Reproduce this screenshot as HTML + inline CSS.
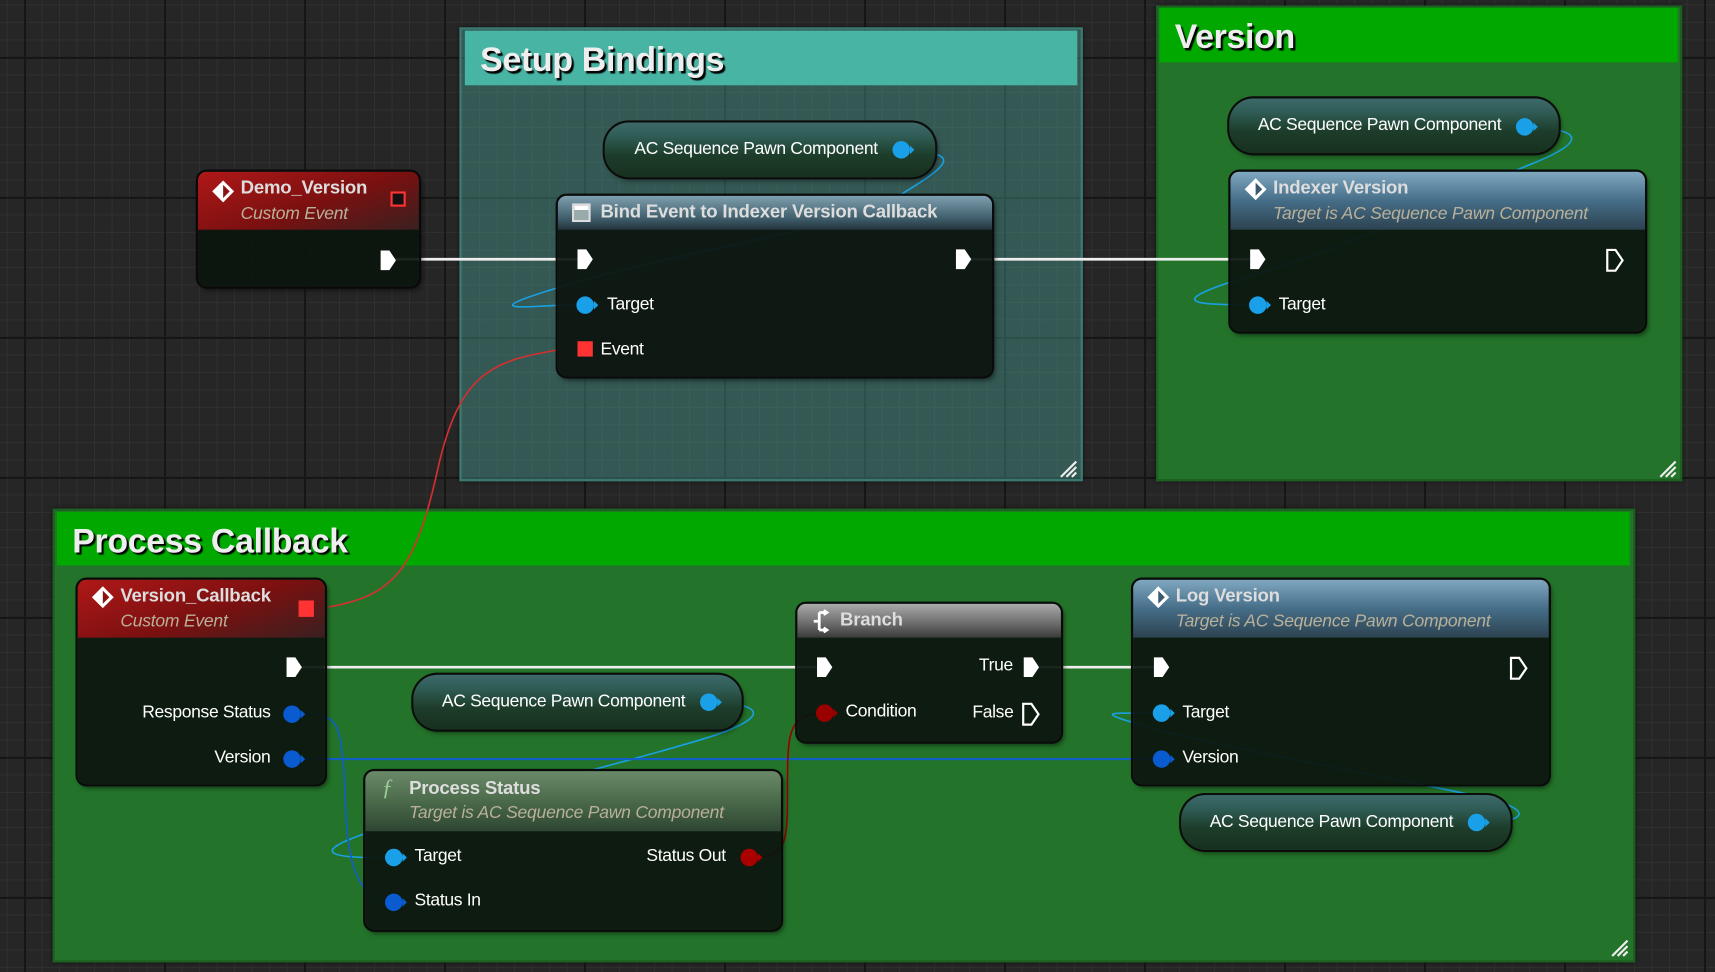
<!DOCTYPE html>
<html><head><meta charset="utf-8"><style>
html,body{margin:0;padding:0;width:1715px;height:972px;overflow:hidden;background:#262626}
#w{position:absolute;left:0;top:0;width:1568px;height:889px;transform:scale(1.09375);transform-origin:0 0;
background-color:#262626;
background-image:linear-gradient(#151515 2px,transparent 2px),linear-gradient(90deg,#151515 2px,transparent 2px),linear-gradient(#303030 1px,transparent 1px),linear-gradient(90deg,#303030 1px,transparent 1px);
background-size:128px 128px,128px 128px,16px 16px,16px 16px;background-position:22px 52px,22px 52px,6px 4px,6px 4px;
font-family:"Liberation Sans Narrow","Liberation Sans",sans-serif;color:#fff}
.a{position:absolute}
.cm{position:absolute;box-shadow:0 0 4px rgba(0,0,0,.6)}
.cmh{position:absolute;font-weight:bold;font-size:31px;letter-spacing:-0.3px;color:#eee;text-shadow:2px 2px 1px #000;padding-left:14px;box-sizing:border-box}
.node{position:absolute;background:rgba(12,20,14,.93);border-radius:8px;box-shadow:0 0 0 2px #0a0a0a,2px 3px 5px rgba(0,0,0,.6);overflow:hidden}
.hd{position:absolute;left:0;top:0;right:0}
.tt{position:absolute;font-size:17px;letter-spacing:-0.2px;font-weight:bold;color:#ddd}
.st{position:absolute;font-size:16px;font-style:italic;color:#b9b09a;letter-spacing:-0.2px}
.lb{position:absolute;font-size:16px;letter-spacing:-0.3px;color:#fff;white-space:nowrap}
.pill{position:absolute;border-radius:22px;background:linear-gradient(#3d6a6a 0%,#2f5c55 25%,#1d3d2a 60%,#17301f 100%);box-shadow:0 0 0 2px #0c0c0c,2px 3px 5px rgba(0,0,0,.5)}
</style></head><body><div id="w">

<div class="cm" style="left:420px;top:25px;width:570px;height:415px;background:rgba(70,150,140,.45);border:2px solid #3a7a72;box-sizing:border-box"></div>
<div class="cmh" style="left:425px;top:28px;width:560px;height:50px;background:#48b4a4;line-height:54px">Setup Bindings</div>
<div class="cm" style="left:1057px;top:5px;width:481px;height:435px;background:#23742a;border:2px solid #1c6020;box-sizing:border-box"></div>
<div class="cmh" style="left:1060px;top:7px;width:474px;height:50px;background:#00a800;line-height:54px">Version</div>
<div class="cm" style="left:48px;top:465px;width:1447px;height:415px;background:#23742a;border:2px solid #1c6020;box-sizing:border-box"></div>
<div class="cmh" style="left:52px;top:468px;width:1438px;height:49px;background:#00a800;line-height:54px">Process Callback</div>
<svg class="a" style="left:968px;top:420px" width="18" height="18"><path d="M2 16L16 2M7 16L16 7M12 16L16 12" stroke="#eee" stroke-width="2"/></svg>
<svg class="a" style="left:1516px;top:420px" width="18" height="18"><path d="M2 16L16 2M7 16L16 7M12 16L16 12" stroke="#eee" stroke-width="2"/></svg>
<svg class="a" style="left:1472px;top:858px" width="18" height="18"><path d="M2 16L16 2M7 16L16 7M12 16L16 12" stroke="#eee" stroke-width="2"/></svg>

<svg class="a" style="left:0;top:0" width="1568" height="889">
<g fill="none">
<path d="M300 555C360 545 380 520 400 430S450 330 510 320" stroke="#d43030" stroke-width="1.5"/>
<path d="M829 138C880 140 870 150 820 180S620 230 520 260S490 278 530 279" stroke="#1aa0e0" stroke-width="1.5"/>
<path d="M1395 116C1450 118 1450 130 1400 150S1250 220 1150 250S1100 278 1150 279" stroke="#1aa0e0" stroke-width="1.5"/>
<path d="M650 642C700 644 700 655 660 670S400 740 340 760S300 785 360 784" stroke="#1aa0e0" stroke-width="1.5"/>
<path d="M1350 752C1400 752 1400 740 1360 730S1100 680 1050 665S1010 652 1060 652" stroke="#1aa0e0" stroke-width="1.5"/>
<path d="M268 652C310 652 310 660 314 700S310 825 360 825" stroke="#1060c8" stroke-width="1.5"/>
<path d="M268 694L1060 694" stroke="#1060c8" stroke-width="2"/>
<path d="M688 784C720 784 720 770 720 720S720 652 755 652" stroke="#900" stroke-width="1.5"/>
<path d="M360 237H530M885 237H1150M275 610H755M940 610H1062" stroke="#eee" stroke-width="2.5"/>
</g></svg>

<div class="node" style="left:181px;top:157px;width:202px;height:105px">
<div class="hd" style="height:53px;background:linear-gradient(160deg,#b01818 0%,#7a1010 55%,#3a2020 100%)"></div>
<svg class="a" style="left:12px;top:7px" width="22" height="22"><path d="M11 1L21 11L11 21L1 11Z" fill="#fff"/><path d="M11 5L17 11L11 17Z" fill="#8a1414"/></svg>
<div class="tt" style="left:39px;top:5px">Demo_Version</div>
<div class="st" style="left:39px;top:30px">Custom Event</div>
<div class="a" style="left:176px;top:18px;width:10px;height:10px;border:2px solid #f33;background:#111"></div>
<svg class="a" style="left:166px;top:71px" width="16" height="20"><path d="M1 1H9L15 10L9 19H1Z" fill="#fff"/></svg>
</div>

<div class="pill" style="left:553px;top:112px;width:302px;height:50px"><div class="lb" style="left:27px;top:16px">AC Sequence Pawn Component</div>
<svg class="a" style="left:262px;top:16px" width="22" height="18"><circle cx="9" cy="9" r="8" fill="#1aa0e8"/><path d="M17 5L21 9L17 13Z" fill="#1aa0e8"/></svg></div>

<div class="node" style="left:510px;top:179px;width:397px;height:165px">
<div class="hd" style="height:31px;background:linear-gradient(#7fa0b0,#3c5a68 70%,#23343c)"></div>
<div class="a" style="left:13px;top:7px;width:17px;height:17px;border:2px solid #ddd;background:linear-gradient(#fff 30%,#9aa 30%);box-sizing:border-box"></div>
<div class="tt" style="left:39px;top:5px">Bind Event to Indexer Version Callback</div>
<svg class="a" style="left:17px;top:48px" width="16" height="20"><path d="M1 1H9L15 10L9 19H1Z" fill="#fff"/></svg>
<svg class="a" style="left:363px;top:48px" width="16" height="20"><path d="M1 1H9L15 10L9 19H1Z" fill="#fff"/></svg>
<svg class="a" style="left:16px;top:91px" width="22" height="18"><circle cx="9" cy="9" r="8" fill="#1aa0e8"/><path d="M17 5L21 9L17 13Z" fill="#1aa0e8"/></svg>
<div class="lb" style="left:45px;top:91px">Target</div>
<div class="a" style="left:18px;top:133px;width:14px;height:14px;background:#f33"></div>
<div class="lb" style="left:39px;top:132px">Event</div>
</div>

<div class="pill" style="left:1124px;top:90px;width:301px;height:50px"><div class="lb" style="left:26px;top:16px">AC Sequence Pawn Component</div>
<svg class="a" style="left:261px;top:17px" width="22" height="18"><circle cx="9" cy="9" r="8" fill="#1aa0e8"/><path d="M17 5L21 9L17 13Z" fill="#1aa0e8"/></svg></div>

<div class="node" style="left:1125px;top:157px;width:379px;height:146px">
<div class="hd" style="height:53px;background:linear-gradient(#7fa8c0,#466e88 50%,#2c4250)"></div>
<svg class="a" style="left:12px;top:5px" width="22" height="22"><path d="M11 1L21 11L11 21L1 11Z" fill="#fff"/><path d="M11 5L17 11L11 17Z" fill="#3a5a70"/></svg>
<div class="tt" style="left:39px;top:5px">Indexer Version</div>
<div class="st" style="left:39px;top:30px">Target is AC Sequence Pawn Component</div>
<svg class="a" style="left:17px;top:70px" width="16" height="20"><path d="M1 1H9L15 10L9 19H1Z" fill="#fff"/></svg>
<svg class="a" style="left:343px;top:70px" width="18" height="22"><path d="M1.5 1.5H9L15.5 11L9 20.5H1.5Z" fill="none" stroke="#fff" stroke-width="2"/></svg>
<svg class="a" style="left:16px;top:113px" width="22" height="18"><circle cx="9" cy="9" r="8" fill="#1aa0e8"/><path d="M17 5L21 9L17 13Z" fill="#1aa0e8"/></svg>
<div class="lb" style="left:44px;top:113px">Target</div>
</div>

<div class="node" style="left:71px;top:530px;width:226px;height:187px">
<div class="hd" style="height:53px;background:linear-gradient(160deg,#b01818 0%,#7a1010 55%,#3a2020 100%)"></div>
<svg class="a" style="left:12px;top:5px" width="22" height="22"><path d="M11 1L21 11L11 21L1 11Z" fill="#fff"/><path d="M11 5L17 11L11 17Z" fill="#8a1414"/></svg>
<div class="tt" style="left:39px;top:5px">Version_Callback</div>
<div class="st" style="left:39px;top:30px">Custom Event</div>
<div class="a" style="left:202px;top:19px;width:14px;height:15px;background:#f33"></div>
<svg class="a" style="left:190px;top:70px" width="16" height="20"><path d="M1 1H9L15 10L9 19H1Z" fill="#fff"/></svg>
<div class="lb" style="left:59px;top:113px">Response Status</div>
<svg class="a" style="left:187px;top:114px" width="22" height="18"><circle cx="9" cy="9" r="8" fill="#0a5ad0"/><path d="M17 5L21 9L17 13Z" fill="#0a5ad0"/></svg>
<div class="lb" style="left:125px;top:154px">Version</div>
<svg class="a" style="left:187px;top:155px" width="22" height="18"><circle cx="9" cy="9" r="8" fill="#0a5ad0"/><path d="M17 5L21 9L17 13Z" fill="#0a5ad0"/></svg>
</div>

<div class="pill" style="left:378px;top:617px;width:300px;height:50px"><div class="lb" style="left:26px;top:16px">AC Sequence Pawn Component</div>
<svg class="a" style="left:261px;top:16px" width="22" height="18"><circle cx="9" cy="9" r="8" fill="#1aa0e8"/><path d="M17 5L21 9L17 13Z" fill="#1aa0e8"/></svg></div>

<div class="node" style="left:334px;top:705px;width:380px;height:145px">
<div class="hd" style="height:55px;background:linear-gradient(#6a8a6a,#4a6a4a 50%,#2e4632)"></div>
<div class="a" style="left:15px;top:3px;font-size:21px;font-style:italic;font-family:'Liberation Serif',serif;color:#9c9">ƒ</div>
<div class="tt" style="left:40px;top:6px">Process Status</div>
<div class="st" style="left:40px;top:30px">Target is AC Sequence Pawn Component</div>
<svg class="a" style="left:17px;top:70px" width="22" height="18"><circle cx="9" cy="9" r="8" fill="#1aa0e8"/><path d="M17 5L21 9L17 13Z" fill="#1aa0e8"/></svg>
<div class="lb" style="left:45px;top:69px">Target</div>
<div class="lb" style="left:257px;top:69px">Status Out</div>
<svg class="a" style="left:342px;top:70px" width="22" height="18"><circle cx="9" cy="9" r="8" fill="#a00"/><path d="M17 5L21 9L17 13Z" fill="#a00"/></svg>
<svg class="a" style="left:17px;top:111px" width="22" height="18"><circle cx="9" cy="9" r="8" fill="#0a5ad0"/><path d="M17 5L21 9L17 13Z" fill="#0a5ad0"/></svg>
<div class="lb" style="left:45px;top:110px">Status In</div>
</div>

<div class="node" style="left:729px;top:552px;width:241px;height:126px">
<div class="hd" style="height:31px;background:linear-gradient(#aaa,#6a6a6a 60%,#3a3a3a)"></div>
<svg class="a" style="left:12px;top:5px" width="22" height="22"><path d="M3 11H8M8 3V19M8 3H14M8 19H14M12 1L15 3L12 5M12 17L15 19L12 21" stroke="#fff" stroke-width="2.5" fill="none"/></svg>
<div class="tt" style="left:39px;top:5px">Branch</div>
<svg class="a" style="left:17px;top:48px" width="16" height="20"><path d="M1 1H9L15 10L9 19H1Z" fill="#fff"/></svg>
<div class="lb" style="left:166px;top:48px">True</div>
<svg class="a" style="left:206px;top:48px" width="16" height="20"><path d="M1 1H9L15 10L9 19H1Z" fill="#fff"/></svg>
<svg class="a" style="left:16px;top:91px" width="22" height="18"><circle cx="9" cy="9" r="8" fill="#9a0000"/><path d="M17 5L21 9L17 13Z" fill="#9a0000"/></svg>
<div class="lb" style="left:44px;top:90px">Condition</div>
<div class="lb" style="left:160px;top:91px">False</div>
<svg class="a" style="left:205px;top:90px" width="18" height="22"><path d="M1.5 1.5H9L15.5 11L9 20.5H1.5Z" fill="none" stroke="#fff" stroke-width="2"/></svg>
</div>

<div class="node" style="left:1036px;top:530px;width:380px;height:187px">
<div class="hd" style="height:53px;background:linear-gradient(#7fa8c0,#466e88 50%,#2c4250)"></div>
<svg class="a" style="left:12px;top:5px" width="22" height="22"><path d="M11 1L21 11L11 21L1 11Z" fill="#fff"/><path d="M11 5L17 11L11 17Z" fill="#3a5a70"/></svg>
<div class="tt" style="left:39px;top:5px">Log Version</div>
<div class="st" style="left:39px;top:30px">Target is AC Sequence Pawn Component</div>
<svg class="a" style="left:18px;top:70px" width="16" height="20"><path d="M1 1H9L15 10L9 19H1Z" fill="#fff"/></svg>
<svg class="a" style="left:344px;top:70px" width="18" height="22"><path d="M1.5 1.5H9L15.5 11L9 20.5H1.5Z" fill="none" stroke="#fff" stroke-width="2"/></svg>
<svg class="a" style="left:17px;top:113px" width="22" height="18"><circle cx="9" cy="9" r="8" fill="#1aa0e8"/><path d="M17 5L21 9L17 13Z" fill="#1aa0e8"/></svg>
<div class="lb" style="left:45px;top:113px">Target</div>
<svg class="a" style="left:17px;top:155px" width="22" height="18"><circle cx="9" cy="9" r="8" fill="#0a5ad0"/><path d="M17 5L21 9L17 13Z" fill="#0a5ad0"/></svg>
<div class="lb" style="left:45px;top:154px">Version</div>
</div>

<div class="pill" style="left:1080px;top:727px;width:301px;height:50px"><div class="lb" style="left:26px;top:16px">AC Sequence Pawn Component</div>
<svg class="a" style="left:261px;top:16px" width="22" height="18"><circle cx="9" cy="9" r="8" fill="#1aa0e8"/><path d="M17 5L21 9L17 13Z" fill="#1aa0e8"/></svg></div>

</div></body></html>
